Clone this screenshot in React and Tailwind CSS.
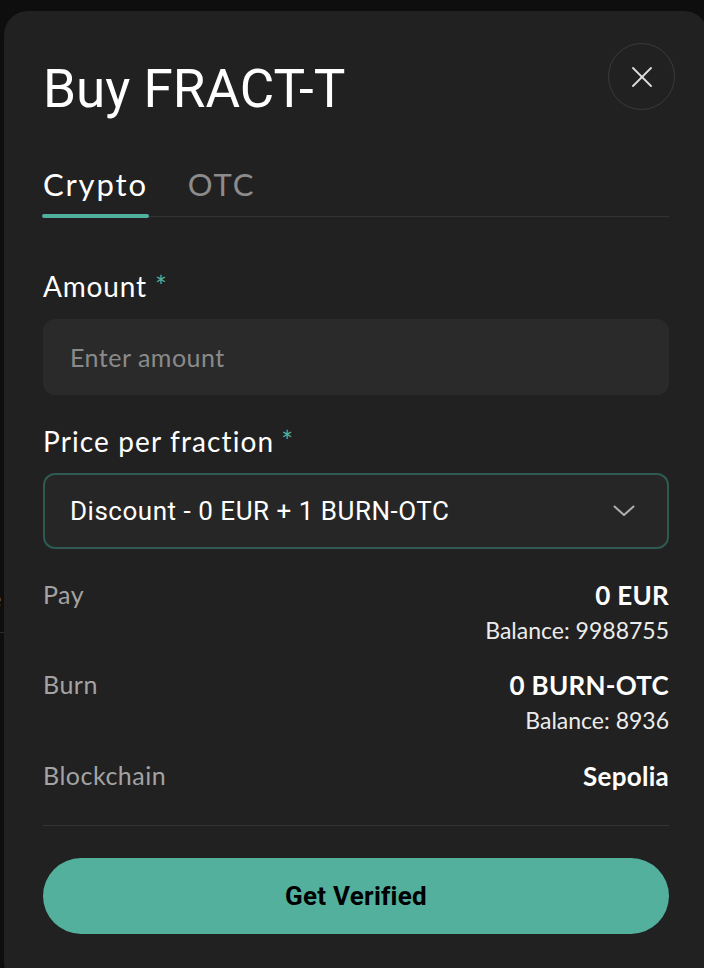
import React from "react";

const lato = { fontFamily: "Lato, 'Open Sans', sans-serif" };
const roboto = { fontFamily: "Roboto, 'Liberation Sans', sans-serif" };

function Row({ label, value, balance, mt }) {
  return (
    <div className={`flex justify-between items-start ${mt}`}>
      <div className="text-[25px] leading-none text-[#a3a3a3] tracking-[0.02em]">{label}</div>
      <div className="flex flex-col items-end">
        <div className="text-[26px] leading-none font-bold text-white tracking-[0.01em]">{value}</div>
        {balance && (
          <div className="mt-[11px] text-[23px] leading-none text-[#ececec]">{balance}</div>
        )}
      </div>
    </div>
  );
}

export default function App() {
  return (
    <div className="relative w-[704px] h-[968px] overflow-hidden bg-[#0e0e0e]" style={lato}>
      {/* page behind the modal */}
      <div className="pt-[586px]">
        <div className="-ml-[11px] text-[24px] leading-none text-[#555]">e</div>
        <div className="mt-[22px] w-[6px] h-px bg-[#2a2a2a]"></div>
      </div>

      {/* modal */}
      <div className="absolute top-[11px] left-[4px] w-[704px] h-[975px] rounded-[24px] bg-[#212121] px-[39px]">
        <div className="flex justify-between items-start pt-[32px]">
          <h1 className="mt-[20px] text-[53px] leading-none text-white" style={roboto}>
            Buy FRACT-T
          </h1>
          <button className="-mr-[6px] w-[67px] h-[67px] rounded-full border border-[#3a3a3a] flex items-center justify-center">
            <svg width="20" height="20" viewBox="0 0 20 20" fill="none" stroke="#dedede" strokeWidth="1.8" strokeLinecap="round">
              <line x1="1" y1="1" x2="19" y2="19" />
              <line x1="19" y1="1" x2="1" y2="19" />
            </svg>
          </button>
        </div>

        {/* tabs */}
        <div className="mt-[53px] flex gap-[40px] border-b border-[#343434]">
          <div className="relative pb-[16px] text-[31px] leading-none text-white tracking-[0.06em]">
            Crypto
            <div className="absolute -left-[1px] -right-[1px] -bottom-[2px] h-[4px] rounded-full bg-[#4fb09c]"></div>
          </div>
          <div className="pb-[16px] text-[31px] leading-none text-[#8c8c8c] tracking-[0.06em]">OTC</div>
        </div>

        {/* amount */}
        <div className="mt-[55px] text-[28px] leading-none text-white tracking-[0.03em]">
          Amount<span className="ml-[8px] text-[#4fb09c] text-[28px]">*</span>
        </div>
        <div className="mt-[19px] h-[76px] rounded-[12px] bg-[#2a2a2a] flex items-center px-[27px]">
          <span className="text-[25px] leading-none text-[#8a8a8a] tracking-[0.02em]">Enter amount</span>
        </div>

        {/* price */}
        <div className="mt-[32px] text-[28px] leading-none text-white tracking-[0.04em]">
          Price per fraction<span className="ml-[7px] text-[#4fb09c] text-[28px]">*</span>
        </div>
        <div className="mt-[18px] h-[76px] rounded-[12px] bg-[#262626] border-2 border-[#2e5a51] flex items-center justify-between pl-[25px] pr-[32px]">
          <span className="text-[26px] leading-none text-white tracking-[0.02em]" style={roboto}>
            Discount - 0 EUR + 1 BURN-OTC
          </span>
          <svg width="22" height="12" viewBox="0 0 22 12" fill="none" stroke="#b0b0b0" strokeWidth="2" strokeLinecap="round" strokeLinejoin="round">
            <polyline points="1.5,1.5 11,10 20.5,1.5" />
          </svg>
        </div>

        {/* details */}
        <Row label="Pay" value="0 EUR" balance="Balance: 9988755" mt="mt-[33px]" />
        <Row label="Burn" value="0 BURN-OTC" balance="Balance: 8936" mt="mt-[30px]" />
        <Row label="Blockchain" value="Sepolia" mt="mt-[31px]" />

        <div className="mt-[36px] h-px bg-[#333333]"></div>

        <button className="mt-[32px] w-full h-[76px] rounded-full bg-[#52b09d] flex items-center justify-center">
          <span className="text-[26px] leading-none font-bold text-black tracking-[0.01em]" style={roboto}>
            Get Verified
          </span>
        </button>
      </div>
    </div>
  );
}
